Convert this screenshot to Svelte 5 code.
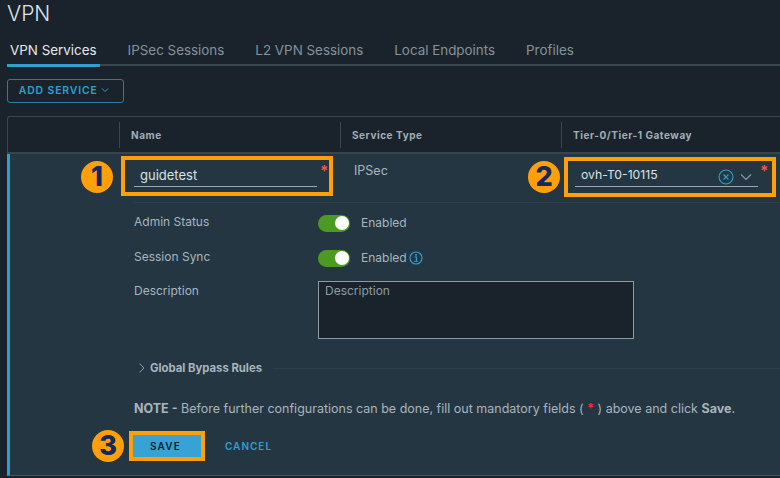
<script>
  const tabs = ['VPN Services', 'IPSec Sessions', 'L2 VPN Sessions', 'Local Endpoints', 'Profiles'];
</script>

<div class="page">
  <h1>VPN</h1>
  <nav class="tabs">
    {#each tabs as tab, i}
      <span class="tab" class:active={i === 0}>{tab}</span>
    {/each}
  </nav>
  <button class="add">ADD SERVICE
    <svg width="8" height="6" viewBox="0 0 8 6"><path d="M1 1.500l3 3 3-3" fill="none" stroke="currentColor" stroke-width="1"/></svg>
  </button>

  <section class="table">
    <div class="head">
      <div class="hcell first"></div>
      <div class="hcell name">Name</div>
      <div class="hcell type">Service Type</div>
      <div class="hcell gw">Tier-0/Tier-1 Gateway</div>
    </div>
    <div class="row">
      <div class="top">
        <div class="namefield">
          <span class="badge b1">1</span>
          <div class="line">guidetest</div>
          <span class="req r1">*</span>
        </div>
        <div class="ipsec">IPSec</div>
        <div class="gwfield">
          <span class="badge b2">2</span>
          <div class="line gwline">
            <span class="gwtext">ovh-T0-10115</span>
            <svg class="clear" width="16" height="16" viewBox="0 0 16 16"><circle cx="8" cy="8" r="7" fill="none" stroke="#2f9fd0" stroke-width="1.1"/><path d="M5.500 5.500l5 5M10.500 5.500l-5 5" stroke="#2f9fd0" stroke-width="1.1"/></svg>
            <svg class="chev" width="12" height="8" viewBox="0 0 12 8"><path d="M1 1.500l5 5 5-5" fill="none" stroke="#8d9ba5" stroke-width="1.1"/></svg>
          </div>
          <span class="req r2">*</span>
        </div>
      </div>
      <div class="divider"></div>
      <div class="form">
        <div class="label">Admin Status</div>
        <div class="val"><span class="toggle"></span><span>Enabled</span></div>
        <div class="label">Session Sync</div>
        <div class="val"><span class="toggle"></span><span>Enabled</span>
          <svg class="info" width="14" height="14" viewBox="0 0 14 14"><circle cx="7" cy="7" r="6" fill="none" stroke="#2f9fd0" stroke-width="1.1"/><path d="M5.500 6h2v4M5.200 10.300h3.600" fill="none" stroke="#2f9fd0" stroke-width="1.1"/><circle cx="7" cy="4" r=".9" fill="#2f9fd0"/></svg>
        </div>
        <div class="label last">Description</div>
        <div class="desc">Description</div>
      </div>
      <div class="bypass">
        <svg width="8" height="12" viewBox="0 0 8 12"><path d="M1.500 1.500l4.500 4.500-4.500 4.500" fill="none" stroke="#8d9ba5" stroke-width="1"/></svg>
        <b>Global Bypass Rules</b>
        <span class="rule"></span>
      </div>
      <p class="note"><b>NOTE -</b> Before further configurations can be done, fill out mandatory fields ( <i>*</i> ) above and click <b>Save</b>.</p>
      <div class="actions">
        <span class="badge b3">3</span>
        <button class="save">SAVE</button>
        <button class="cancel">CANCEL</button>
      </div>
    </div>
  </section>
</div>

<style>
  :global(body) { margin: 0; background: #1a232b; }
  .page { width: 780px; height: 478px; overflow: hidden; background: #1a232b; padding: 0 0 0 7px; box-sizing: border-box; font-family: Inter, "Liberation Sans", sans-serif; color: #a9b5bd; }
  h1 { margin: 0; padding-top: 2px; height: 28px; box-sizing: border-box; font-size: 21px; line-height: 24px; font-weight: 300; color: #dfe5e9; }
  .tabs { height: 38px; display: flex; gap: 31px; padding-left: 3px; border-bottom: 2px solid #3a474f; box-sizing: border-box; align-items: center; }
  .tab { font-size: 13.400px; color: #85929b; position: relative; padding-top: 7px; white-space: nowrap; }
  .tab.active { color: #e4e9ec; }
  .tab.active::after { content: ""; position: absolute; left: -3px; right: -3px; bottom: -9px; height: 3px; background: #2f9fd0; }
  .add { display: block; margin-top: 13px; width: 117px; height: 24px; box-sizing: border-box; border: 1px solid #2b7ba3; border-radius: 3px; background: transparent; color: #2f9fd0; font: 600 10.400px Inter, sans-serif; letter-spacing: .9px; padding: 0 3px 1px 0; }
  .add svg { vertical-align: 1px; }
  .table { margin-top: 13px; border: 1px solid #3a474f; border-right: 0; border-bottom: 0; border-radius: 3px 0 0 0; }
  .head { height: 35px; display: grid; grid-template-columns: 111px 221px 221px 1fr; align-items: center; font-size: 10px; font-weight: 700; color: #a2aeb6; letter-spacing: .55px; border-bottom: 2px solid #36444d; box-sizing: content-box; }
  .hcell { height: 26px; line-height: 26px; padding-left: 11px; border-left: 1px solid #3a474f; box-sizing: border-box; white-space: nowrap; }
  .hcell.first { border-left: 0; }
  .row { height: 322px; background: #233642; border-left: 3px solid #2f9fd0; margin-left: -1px; border-bottom: 1px solid #46545c; padding-left: 124px; box-sizing: border-box; font-size: 12px; }
  .top { display: grid; grid-template-columns: 221px 223px 1fr; height: 50px; margin-left: -13px; }
  .namefield { position: relative; padding: 8px 0 0 13px; height: 30px; }
  .line { color: #dce2e6; font-size: 13px; height: 25px; line-height: 27px; border-bottom: 1px solid #9aa7af; padding-left: 6px; width: 183px; box-sizing: border-box; }
  .namefield::after, .gwfield::after { content: ""; position: absolute; top: 2px; left: 0; width: 212px; height: 40px; border: 4px solid #ff9f0a; box-sizing: border-box; pointer-events: none; }
  .gwfield::after { top: 3px; left: -1px; }
  .req { position: absolute; color: #f0524e; font-size: 15px; font-weight: 700; line-height: 15px; }
  .r1 { left: 199px; top: 9px; }
  .r2 { left: 195px; top: 9px; }
  .ipsec { padding: 9px 0 0 12px; font-size: 12.500px; color: #a9b5bd; }
  .gwfield { position: relative; padding: 8px 0 0 10px; height: 30px; }
  .gwline { display: flex; align-items: center; }
  .gwtext { font-size: 12.200px; margin-top: 1px; }
  .clear { margin-left: auto; margin-right: 6px; margin-top: 5px; }
  .chev { margin-right: 6px; margin-top: 5px; }
  .badge { position: absolute; width: 32px; height: 32px; border-radius: 50%; background: #ff9f0a; color: #122a5c; font-size: 27px; font-weight: 800; line-height: 32px; text-align: center; }
  .b1 { left: -40px; top: 7px; }
  .b2 { left: -37px; top: 7px; }
  .b3 { left: -37px; top: -1px; }
  .divider { height: 1px; background: #2c404c; margin-top: -2px; }
  .form { display: grid; grid-template-columns: 184px 316px; grid-template-rows: 35px 35px 76px; padding-top: 1px; }
  .label { padding-top: 10px; font-size: 12px; color: #a9b5bd; }
  .label.last { padding-top: 9px; }
  .val { display: flex; align-items: center; padding-top: 1px; height: 34px; font-size: 12px; color: #a9b5bd; }
  .toggle { width: 32px; height: 17px; margin-top: 2px; border-radius: 9px; background: #4a9a23; position: relative; margin-right: 11px; }
  .toggle::after { content: ""; position: absolute; right: 1px; top: 1.500px; width: 14px; height: 14px; border-radius: 50%; background: #fff; }
  .info { margin-left: 2px; margin-top: 1px; }
  .desc { width: 316px; height: 58px; margin-top: 7px; box-sizing: border-box; border: 1px solid #8d9ba5; background: #1a232b; color: #8d9ba5; padding: 1px 6px; font-size: 12px; }
  .bypass { display: flex; align-items: center; gap: 4px; height: 20px; margin-top: 8px; padding-left: 4px; font-size: 11.300px; color: #a9b5bd; }
  .rule { flex: 1; height: 1px; background: #2c404c; margin-left: 7px; }
  .note { margin: 23px 0 0; font-size: 12.500px; line-height: 16px; white-space: nowrap; color: #a9b5bd; }
  .note i { color: #f0302e; font-style: normal; font-weight: 700; }
  .actions { position: relative; display: flex; align-items: center; margin-top: 14px; margin-left: -5px; gap: 20px; }
  .save { width: 76px; height: 30px; background: #37a3d4; border: 4px solid #ff9f0a; box-sizing: border-box; color: #0e1d28; font: 600 10px Inter, sans-serif; letter-spacing: 1.200px; padding: 0 3px 0 0; }
  .cancel { background: none; border: 0; padding: 0; color: #2f9fd0; font: 600 10px Inter, sans-serif; letter-spacing: 1px; }
</style>
